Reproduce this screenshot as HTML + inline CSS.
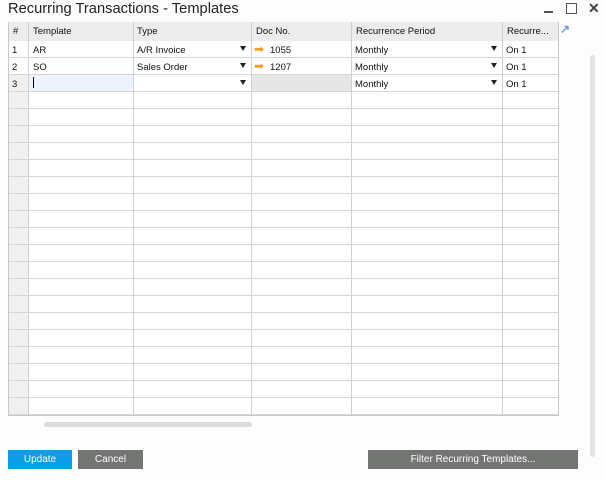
<!DOCTYPE html><html><head><style>
body{margin:0;width:606px;height:480px;background:#fdfdfd;font-family:"Liberation Sans",sans-serif;position:relative;overflow:hidden}
.a{position:absolute}
.t{font-size:9.5px;color:#111;white-space:nowrap}
.dd{position:absolute;width:0;height:0;border-left:3.5px solid transparent;border-right:3.5px solid transparent;border-top:5px solid #222}
.btn{position:absolute;top:450px;height:19px;color:#fff;font-size:10px;text-align:center;line-height:19px}
</style></head><body>
<div class="a" style="left:8px;top:1px;font-size:14.7px;color:#222">Recurring Transactions - Templates</div>
<div class="a" style="left:544px;top:11px;width:9px;height:2px;background:#555"></div>
<div class="a" style="left:566px;top:3px;width:9px;height:9px;border:1px solid #555"></div>
<div class="a" style="left:588px;top:0;font-size:14px;color:#444;font-weight:bold">✕</div>
<div class="a" style="left:8px;top:22px;width:550px;height:19px;background:#ececec;border-bottom:1px solid #d0d0d0"></div>
<div class="a" style="left:8px;top:41px;width:550px;height:374px;background:#fff repeating-linear-gradient(to bottom,transparent 0,transparent 16px,#d6d6d6 16px,#d6d6d6 17px);border-bottom:1px solid #c8c8c8"></div>
<div class="a" style="left:8px;top:41px;width:20px;height:374px;background:repeating-linear-gradient(to bottom,#f0f0f0 0,#f0f0f0 16px,#d6d6d6 16px,#d6d6d6 17px)"></div>
<div class="a" style="left:8px;top:41px;width:20px;height:50px;background:repeating-linear-gradient(to bottom,#fff 0,#fff 16px,#d6d6d6 16px,#d6d6d6 17px)"></div>
<div class="a" style="left:29px;top:75px;width:104px;height:16px;background:#eef3fb"></div>
<div class="a" style="left:252px;top:75px;width:99px;height:16px;background:#e6e6e6"></div>
<div class="a" style="left:8px;top:75px;width:20px;height:16px;background:#f0f0f0"></div>
<div class="a" style="left:28px;top:22px;width:1px;height:393px;background:#d0d0d0"></div>
<div class="a" style="left:133px;top:22px;width:1px;height:393px;background:#d0d0d0"></div>
<div class="a" style="left:251px;top:22px;width:1px;height:393px;background:#d0d0d0"></div>
<div class="a" style="left:351px;top:22px;width:1px;height:393px;background:#d0d0d0"></div>
<div class="a" style="left:502px;top:22px;width:1px;height:393px;background:#d0d0d0"></div>
<div class="a" style="left:558px;top:22px;width:1px;height:394px;background:#c8c8c8"></div>
<div class="a" style="left:8px;top:22px;width:1px;height:394px;background:#c8c8c8"></div>
<div class="a t" style="left:13px;top:26px">#</div>
<div class="a t" style="left:33px;top:26px">Template</div>
<div class="a t" style="left:137px;top:26px">Type</div>
<div class="a t" style="left:256px;top:26px">Doc No.</div>
<div class="a t" style="left:356px;top:26px">Recurrence Period</div>
<div class="a t" style="left:507px;top:26px">Recurre...</div>
<div class="a" style="left:560px;top:22px;color:#6a9fd8;font-size:12px;font-weight:bold">↗</div>
<div class="a t" style="left:12px;top:45px">1</div><div class="a t" style="left:33px;top:45px">AR</div><div class="a t" style="left:137px;top:45px">A/R Invoice</div><div class="dd" style="left:240px;top:46px"></div>
<div class="a" style="left:254px;top:42px;color:#f0a020;font-size:12px">➡</div><div class="a t" style="left:270px;top:45px">1055</div>
<div class="a t" style="left:355px;top:45px">Monthly</div><div class="dd" style="left:491px;top:46px"></div><div class="a t" style="left:506px;top:45px">On 1</div>
<div class="a t" style="left:12px;top:62px">2</div><div class="a t" style="left:33px;top:62px">SO</div><div class="a t" style="left:137px;top:62px">Sales Order</div><div class="dd" style="left:240px;top:63px"></div>
<div class="a" style="left:254px;top:59px;color:#f0a020;font-size:12px">➡</div><div class="a t" style="left:270px;top:62px">1207</div>
<div class="a t" style="left:355px;top:62px">Monthly</div><div class="dd" style="left:491px;top:63px"></div><div class="a t" style="left:506px;top:62px">On 1</div>
<div class="a t" style="left:12px;top:79px">3</div><div class="a" style="left:33px;top:77px;width:1px;height:11px;background:#000"></div><div class="dd" style="left:240px;top:80px"></div>
<div class="a t" style="left:355px;top:79px">Monthly</div><div class="dd" style="left:491px;top:80px"></div><div class="a t" style="left:506px;top:79px">On 1</div>
<div class="a" style="left:44px;top:422px;width:208px;height:5px;background:#dcdcdc;border-radius:3px"></div>
<div class="a" style="left:590px;top:55px;width:5px;height:402px;background:#e4e4e4;border-radius:3px"></div>
<div class="btn" style="left:8px;width:64px;background:#0b9de8">Update</div>
<div class="btn" style="left:78px;width:65px;background:#737573">Cancel</div>
<div class="btn" style="left:368px;width:210px;background:#737573">Filter Recurring Templates...</div>
</body></html>
